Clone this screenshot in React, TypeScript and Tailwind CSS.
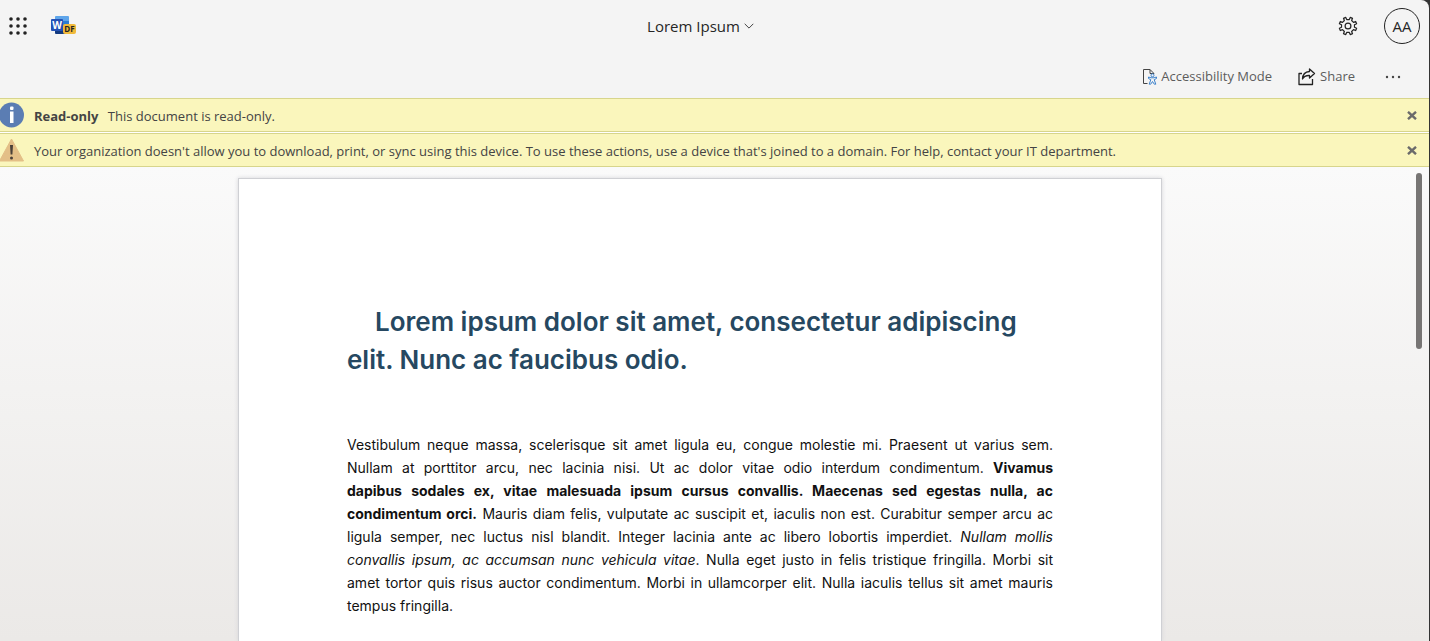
import type { ReactNode } from "react";

const bodyLines: ReactNode[] = [
  "Vestibulum neque massa, scelerisque sit amet ligula eu, congue molestie mi. Praesent ut varius sem.",
  <>Nullam at porttitor arcu, nec lacinia nisi. Ut ac dolor vitae odio interdum condimentum. <b>Vivamus</b></>,
  <b>dapibus sodales ex, vitae malesuada ipsum cursus convallis. Maecenas sed egestas nulla, ac</b>,
  <><b>condimentum orci.</b> Mauris diam felis, vulputate ac suscipit et, iaculis non est. Curabitur semper arcu ac</>,
  <>ligula semper, nec luctus nisl blandit. Integer lacinia ante ac libero lobortis imperdiet. <i>Nullam mollis</i></>,
  <><i>convallis ipsum, ac accumsan nunc vehicula vitae</i>. Nulla eget justo in felis tristique fringilla. Morbi sit</>,
  "amet tortor quis risus auctor condimentum. Morbi in ullamcorper elit. Nulla iaculis tellus sit amet mauris",
];

function WaffleIcon() {
  return (
    <svg width="18" height="18" viewBox="0 0 18 18" fill="#222" aria-hidden="true">
      {[2, 9, 16].map((y) => [2, 9, 16].map((x) => <circle key={`${x}-${y}`} cx={x} cy={y} r="1.8" />))}
    </svg>
  );
}

function WordLogo() {
  return (
    <svg width="26" height="20" viewBox="0 0 26 20" role="img" aria-label="Word DF">
      <path d="M5 0h12a1 1 0 0 1 1 1v4H4V1a1 1 0 0 1 1-1z" fill="#5ea5ea" />
      <path d="M4 5h14v5H4z" fill="#2b7cd3" />
      <path d="M4 10h14v5H4z" fill="#185abd" />
      <path d="M4 14h14v4H5a1 1 0 0 1-1-1z" fill="#133a80" />
      <rect x="0" y="3" width="12" height="12" rx="1" fill="#2452b5" />
      <text x="6" y="12.500" textAnchor="middle" fontFamily="Open Sans, sans-serif" fontWeight="700" fontSize="10" fill="#fff">W</text>
      <rect x="12" y="8" width="13" height="10" rx="2" fill="#f0b93a" />
      <text x="18.500" y="16" textAnchor="middle" fontFamily="Open Sans, sans-serif" fontWeight="700" fontSize="8" fill="#222">DF</text>
    </svg>
  );
}

const gearPoints = Array.from({ length: 8 }, (_, tooth) =>
  [
    [6.6, 11.5],
    [8.9, 14.5],
    [8.9, 30.5],
    [6.6, 33.5],
  ].map(([radius, degrees]) => {
    const angle = ((tooth * 45 + degrees) * Math.PI) / 180;
    return `${(10 + radius * Math.cos(angle)).toFixed(2)},${(10 + radius * Math.sin(angle)).toFixed(2)}`;
  }),
)
  .flat()
  .join(" ");

function GearIcon() {
  return (
    <svg width="20" height="20" viewBox="0 0 20 20" fill="none" stroke="#222" strokeWidth="1.2" strokeLinejoin="round" aria-hidden="true">
      <polygon points={gearPoints} />
      <circle cx="10" cy="10" r="2.900" />
    </svg>
  );
}

function AccessibilityIcon() {
  return (
    <svg width="14" height="16" viewBox="0 0 14 16" fill="none" aria-hidden="true">
      <path d="M4.500 14.500h-4V.5h6.500l4 4M7 .5v4h4" stroke="#444" />
      <circle cx="9.500" cy="6.300" r="1.500" stroke="#3f83cc" />
      <path d="M8 8.800L5.500 8v1.500l2.300 1.200-1.600 4.500h1.500l1.800-2.700 1.800 2.700h1.500l-1.600-4.500 2.300-1.200V8L11 8.800z" stroke="#3f83cc" />
    </svg>
  );
}

function ShareIcon() {
  return (
    <svg width="18" height="18" viewBox="0 0 18 18" fill="none" stroke="#222" strokeWidth="1.300" strokeLinejoin="round" aria-hidden="true">
      <path d="M4 5.500H1v11h13.500V11" />
      <path d="M11.500 1l5 4.500-5 4.500V7.500C8 7.300 5.800 8.500 4.500 11c.2-4.500 2.700-7.200 7-7.500z" />
    </svg>
  );
}

function InfoIcon() {
  return (
    <svg width="24" height="26" viewBox="0 0 24 26" aria-hidden="true">
      <circle cx="11.500" cy="13" r="12.500" fill="#5b7db3" />
      <rect x="10" y="4.500" width="3.500" height="3.500" rx="1" fill="#fff" />
      <rect x="10" y="9.500" width="3.500" height="11.500" fill="#fff" />
    </svg>
  );
}

function WarningIcon() {
  return (
    <svg width="24" height="24" viewBox="0 0 24 24" aria-hidden="true">
      <path d="M11.500 1L23.500 23H-.5z" fill="#e3bf87" stroke="#e3bf87" strokeLinejoin="round" />
      <path d="M10 7h3l-.6 9.500h-1.800z" fill="#4a4038" />
      <circle cx="11.500" cy="20" r="1.500" fill="#4a4038" />
    </svg>
  );
}

function Banner({ icon, children, label }: { icon: ReactNode; children: ReactNode; label: string }) {
  return (
    <div role="status" className="flex h-[34px] items-center border-y border-[#d7d58c] bg-[#faf6bc] text-[13px] leading-5 text-[#444]">
      <span className="flex w-[34px] shrink-0">{icon}</span>
      <p className="grow whitespace-nowrap pt-0.5">{children}</p>
      <button type="button" aria-label={label} className="mr-[11px] flex size-3 items-center justify-center">
        <svg width="10" height="9" viewBox="0 0 10 9" stroke="#6b6b6b" strokeWidth="2.400" aria-hidden="true">
          <path d="M1 .8l8 7.400M9 .8L1 8.200" />
        </svg>
      </button>
    </div>
  );
}

export default function App() {
  return (
    <div className="h-screen overflow-hidden bg-[#333] pr-px font-['Open_Sans',sans-serif]">
      <div className="flex h-full flex-col rounded-tr-lg bg-[#f4f4f4]">
        <header className="grid h-[52px] shrink-0 grid-cols-[1fr_auto_1fr] items-center px-[9px] text-[#262626]">
          <div className="flex items-center gap-6">
            <button type="button" aria-label="App launcher"><WaffleIcon /></button>
            <WordLogo />
          </div>
          <button type="button" className="mr-7 flex items-center gap-1 text-[15px]">
            Lorem Ipsum
            <svg width="10" height="6" viewBox="0 0 10 6" fill="none" stroke="#444" aria-hidden="true"><path d="M.7.8L5 5.100 9.300.8" /></svg>
          </button>
          <div className="flex items-center justify-end gap-[26px]">
            <button type="button" aria-label="Settings"><GearIcon /></button>
            <button type="button" aria-label="Account" className="flex size-9 items-center justify-center rounded-full border border-[#222] text-[15px]">AA</button>
          </div>
        </header>
        <nav aria-label="Document actions" className="flex h-[46px] shrink-0 items-center justify-end pr-7 pt-1 text-[13px] text-[#5c5c5c]">
          <button type="button" className="mr-[26px] flex items-center gap-1"><AccessibilityIcon />Accessibility Mode</button>
          <button type="button" className="mr-[30px] flex items-center gap-1"><ShareIcon />Share</button>
          <button type="button" aria-label="More options">
            <svg width="16" height="4" viewBox="0 0 16 4" fill="#444" aria-hidden="true"><circle cx="2" cy="2" r="1.200" /><circle cx="8" cy="2" r="1.200" /><circle cx="14" cy="2" r="1.200" /></svg>
          </button>
        </nav>
        <div className="flex shrink-0 flex-col gap-px bg-white">
          <Banner icon={<InfoIcon />} label="Dismiss read-only message"><b className="mr-1.5">Read-only</b> This document is read-only.</Banner>
          <Banner icon={<WarningIcon />} label="Dismiss organization message">
            Your organization doesn't allow you to download, print, or sync using this device. To use these actions, use a device that's joined to a domain. For help, contact your IT department.
          </Banner>
        </div>
        <main className="flex min-h-0 grow items-stretch bg-linear-to-b from-[#fafafa] to-[#ebe9e7] pr-[7px]">
          <div className="flex grow justify-center pr-4 pt-[11px]">
            <article className="w-[924px] border border-b-0 border-[#cfd0d4] bg-white px-[108px] pt-[124px] font-['Inter',sans-serif] text-[#111] shadow-[0_0_4px_#d5d5d9]">
              <h1 className="indent-7 text-[26px] font-semibold leading-[38px] text-[#264861]">
                Lorem ipsum dolor sit amet, consectetur adipiscing elit. Nunc ac faucibus odio.
              </h1>
              <p className="mt-[54px] text-[14px] leading-[23px]">
                {bodyLines.map((line, i) => (
                  <span key={i} className="block whitespace-nowrap text-justify [text-align-last:justify]">{line}</span>
                ))}
                tempus fringilla.
              </p>
            </article>
          </div>
          <div role="scrollbar" aria-controls="root" aria-valuenow={0} aria-label="Document position" className="mt-1.5 h-44 w-[6px] rounded-full bg-[#777574]" />
        </main>
      </div>
    </div>
  );
}
